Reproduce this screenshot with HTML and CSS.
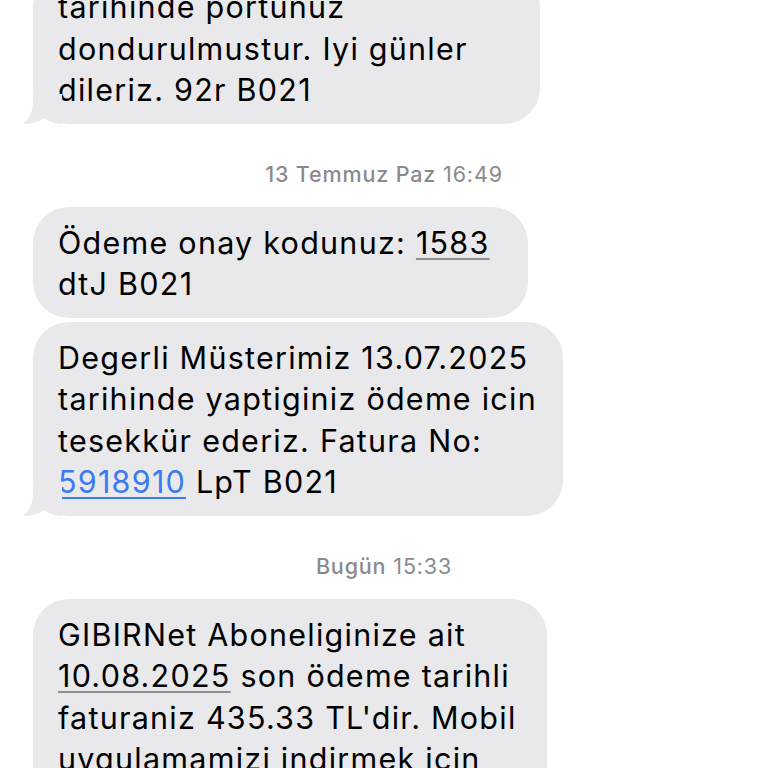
FILE: index.html
```html
<!DOCTYPE html>
<html lang="tr">
<head>
<meta charset="utf-8">
<title>Mesajlar</title>
<link rel="stylesheet" href="styles.css">
</head>
<body>
<main class="thread">
  <div class="bubble b1 tail">
    <p class="msg">tarihinde portunuz<br>dondurulmustur. Iyi günler<br>dileriz. 92r B021</p>
    <svg class="tail-svg" width="40" height="30" viewBox="0 0 40 30" aria-hidden="true"><path d="M11 0 L11 6 C11 18 7 26 0.5 30 C8 30.5 16 28 22.5 24 C27 27.5 33 30 40 30 L40 0 Z"/></svg>
  </div>

  <div class="stamp"><span class="stamp-day">13 Temmuz Paz</span> 16:49</div>

  <div class="bubble b2">
    <p class="msg">Ödeme onay kodunuz: <span class="data">1583</span><br>dtJ B021</p>
  </div>

  <div class="bubble b3 tail">
    <p class="msg">Degerli Müsterimiz 13.07.2025<br>tarihinde yaptiginiz ödeme icin<br>tesekkür ederiz. Fatura No:<br><span class="link">5918910</span> LpT B021</p>
    <svg class="tail-svg" width="40" height="30" viewBox="0 0 40 30" aria-hidden="true"><path d="M11 0 L11 6 C11 18 7 26 0.5 30 C8 30.5 16 28 22.5 24 C27 27.5 33 30 40 30 L40 0 Z"/></svg>
  </div>

  <div class="stamp"><span class="stamp-day">Bugün</span> 15:33</div>

  <div class="bubble b4">
    <p class="msg">GIBIRNet Aboneliginize ait<br><span class="data">10.08.2025</span> son ödeme tarihli<br>faturaniz 435.33 TL'dir. Mobil<br>uygulamamizi indirmek icin<br>tiklayiniz.</p>
  </div>
</main>
</body>
</html>
```
FILE: styles.css
```css
html, body {
  margin: 0;
  padding: 0;
  background: #ffffff;
}
body {
  width: 768px;
  height: 768px;
  overflow: hidden;
  font-family: Inter, "Noto Sans", "Liberation Sans", sans-serif;
  color: #000;
}
.thread {
  display: flex;
  flex-direction: column;
  align-items: flex-start;
  padding-left: 33px;
  margin-top: -29px;
}
.bubble {
  position: relative;
  box-sizing: border-box;
  background: #e9e9eb;
  border-radius: 36px;
  padding: 15px 0 13px 25px;
}
.b1 { width: 507px; }
.b2 { width: 495px; margin-top: -1px; }
.b3 { width: 530px; margin-top: 4px; }
.b4 { width: 514px; margin-top: -1px; }
.msg {
  margin: 0;
  font-size: 30.5px;
  line-height: 41.5px;
  letter-spacing: 1.25px;
  white-space: nowrap;
}
.data {
  text-decoration: underline;
  text-decoration-color: #8e8e93;
  text-decoration-thickness: 2px;
  text-underline-offset: 4px;
}
.link {
  color: #3a7af2;
  text-decoration: underline;
  text-decoration-thickness: 2px;
  text-underline-offset: 4px;
}
.tail-svg {
  position: absolute;
  left: -11px;
  bottom: 0;
  fill: #e9e9eb;
}
.stamp {
  align-self: center;
  margin: 37px 0 21px -33px;
  font-size: 21.5px;
  line-height: 26px;
  letter-spacing: 0.85px;
  color: #8a8a8e;
  font-weight: 400;
}
.stamp-day {
  font-weight: 500;
}
```
